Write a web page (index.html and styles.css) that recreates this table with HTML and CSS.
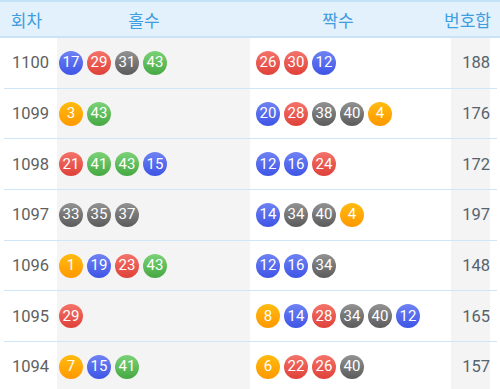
FILE: index.html
```html
<!DOCTYPE html>
<html lang="ko">
<head>
<meta charset="utf-8">
<link rel="stylesheet" href="styles.css">
</head>
<body>
<div class="table">
  <div class="head">
    <div class="h">회차</div>
    <div class="h">홀수</div>
    <div class="h">짝수</div>
    <div class="h">번호합</div>
  </div>
  <div class="body">
    <div class="row">
      <div class="no">1100</div>
      <div class="balls odd"><span class="b blue">17</span><span class="b red">29</span><span class="b grey">31</span><span class="b green">43</span></div>
      <div class="balls even"><span class="b red">26</span><span class="b red">30</span><span class="b blue">12</span></div>
      <div class="sum">188</div>
    </div>
    <div class="sep"></div>
    <div class="row">
      <div class="no">1099</div>
      <div class="balls odd"><span class="b orange">3</span><span class="b green">43</span></div>
      <div class="balls even"><span class="b blue">20</span><span class="b red">28</span><span class="b grey">38</span><span class="b grey">40</span><span class="b orange">4</span></div>
      <div class="sum">176</div>
    </div>
    <div class="sep"></div>
    <div class="row">
      <div class="no">1098</div>
      <div class="balls odd"><span class="b red">21</span><span class="b green">41</span><span class="b green">43</span><span class="b blue">15</span></div>
      <div class="balls even"><span class="b blue">12</span><span class="b blue">16</span><span class="b red">24</span></div>
      <div class="sum">172</div>
    </div>
    <div class="sep"></div>
    <div class="row">
      <div class="no">1097</div>
      <div class="balls odd"><span class="b grey">33</span><span class="b grey">35</span><span class="b grey">37</span></div>
      <div class="balls even"><span class="b blue">14</span><span class="b grey">34</span><span class="b grey">40</span><span class="b orange">4</span></div>
      <div class="sum">197</div>
    </div>
    <div class="sep"></div>
    <div class="row">
      <div class="no">1096</div>
      <div class="balls odd"><span class="b orange">1</span><span class="b blue">19</span><span class="b red">23</span><span class="b green">43</span></div>
      <div class="balls even"><span class="b blue">12</span><span class="b blue">16</span><span class="b grey">34</span></div>
      <div class="sum">148</div>
    </div>
    <div class="sep"></div>
    <div class="row">
      <div class="no">1095</div>
      <div class="balls odd"><span class="b red">29</span></div>
      <div class="balls even"><span class="b orange">8</span><span class="b blue">14</span><span class="b red">28</span><span class="b grey">34</span><span class="b grey">40</span><span class="b blue">12</span></div>
      <div class="sum">165</div>
    </div>
    <div class="sep"></div>
    <div class="row">
      <div class="no">1094</div>
      <div class="balls odd"><span class="b orange">7</span><span class="b blue">15</span><span class="b green">41</span></div>
      <div class="balls even"><span class="b orange">6</span><span class="b red">22</span><span class="b red">26</span><span class="b grey">40</span></div>
      <div class="sum">157</div>
    </div>
    <div class="sep"></div>
  </div>
</div>
</body>
</html>
```
FILE: styles.css
```css
html, body {
  margin: 0;
  padding: 0;
  background: #ffffff;
  font-family: Roboto, "Noto Sans", "Noto Sans CJK KR", sans-serif;
}

.table {
  width: 500px;
  height: 389px;
  overflow: hidden;
}

.head {
  display: grid;
  grid-template-columns: 53px 182px 206px 53px 6px;
  height: 34px;
  background: #e2f1fc;
  border-top: 2px solid #c4e2f7;
  border-bottom: 2px solid #c9e4f7;
  align-items: center;
}

.h {
  text-align: center;
  color: #3f9ee0;
  font-family: "Noto Sans CJK KR", sans-serif;
  font-size: 17px;
  line-height: 20px;
  padding-top: 1px;
}

.body {
  background: linear-gradient(to right,
    #ffffff 0 57px,
    #f4f4f4 57px 250px,
    #ffffff 250px 451px,
    #f4f4f4 451px 490px,
    #ffffff 490px);
}

.row {
  display: grid;
  grid-template-columns: 57px 193px 201px 39px 10px;
  height: 49.7px;
  align-items: center;
}

.sep {
  height: 1px;
  margin: 0 3px 0 4px;
  background: #cfe6f6;
}

.no {
  color: #5f5f5f;
  font-size: 16.5px;
  text-align: center;
  padding-left: 4px;
}

.sum {
  color: #56636c;
  font-size: 16.5px;
  text-align: right;
}

.balls {
  display: flex;
  gap: 4px;
}

.odd {
  padding-left: 2px;
}

.even {
  padding-left: 6px;
}

.b {
  width: 24px;
  height: 24px;
  border-radius: 50%;
  display: flex;
  align-items: center;
  justify-content: center;
  color: #ffffff;
  font-size: 15px;
  line-height: 1;
}

.orange { background: linear-gradient(to bottom, #ffbb10, #ff9800); }
.blue { background: linear-gradient(to bottom, #6f82f3, #3e55e6); }
.red { background: linear-gradient(to bottom, #f4736a, #df4139); }
.grey { background: linear-gradient(to bottom, #929292, #5b5b5b); }
.green { background: linear-gradient(to bottom, #7cd277, #45a842); }
```
